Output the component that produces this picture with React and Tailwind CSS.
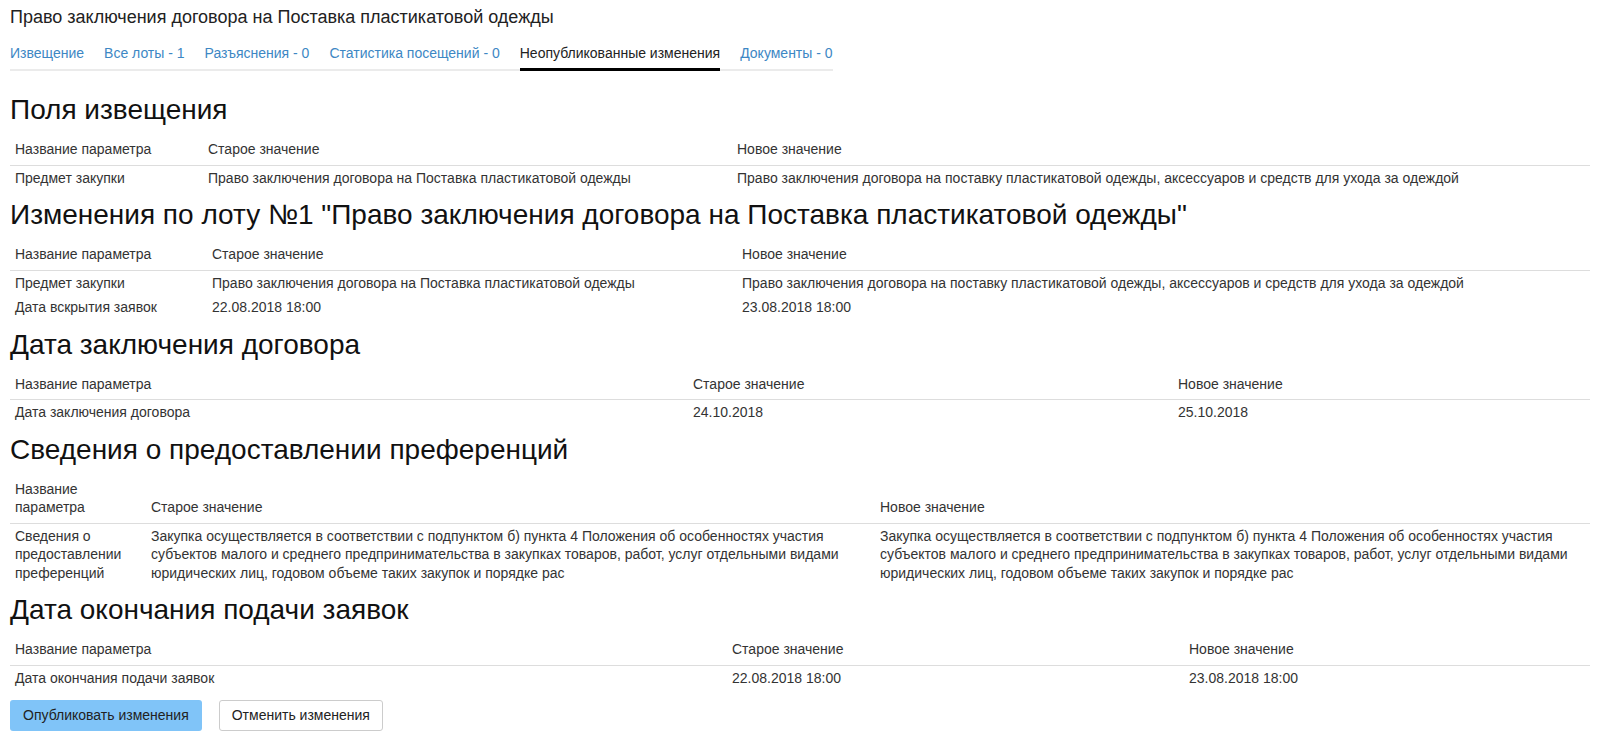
import React from 'react';

const tabs = [
  { label: 'Извещение' },
  { label: 'Все лоты - 1' },
  { label: 'Разъяснения - 0' },
  { label: 'Статистика посещений - 0' },
  { label: 'Неопубликованные изменения', active: true },
  { label: 'Документы - 0' },
];

// column widths: first, second (the third takes the rest)
const sections = [
  {
    title: 'Поля извещения',
    cols: ['w-[193px]', 'w-[529px]'],
    rows: [
      [
        'Предмет закупки',
        'Право заключения договора на Поставка пластикатовой одежды',
        'Право заключения договора на поставку пластикатовой одежды, аксессуаров и средств для ухода за одеждой',
      ],
    ],
  },
  {
    title: 'Изменения по лоту №1 "Право заключения договора на Поставка пластикатовой одежды"',
    cols: ['w-[197px]', 'w-[530px]'],
    rows: [
      [
        'Предмет закупки',
        'Право заключения договора на Поставка пластикатовой одежды',
        'Право заключения договора на поставку пластикатовой одежды, аксессуаров и средств для ухода за одеждой',
      ],
      ['Дата вскрытия заявок', '22.08.2018 18:00', '23.08.2018 18:00'],
    ],
  },
  {
    title: 'Дата заключения договора',
    cols: ['w-[678px]', 'w-[485px]'],
    rows: [['Дата заключения договора', '24.10.2018', '25.10.2018']],
  },
  {
    title: 'Сведения о предоставлении преференций',
    cols: ['w-[136px]', 'w-[729px]'],
    rows: [
      [
        'Сведения о предоставлении преференций',
        'Закупка осуществляется в соответствии с подпунктом б) пункта 4 Положения об особенностях участия субъектов малого и среднего предпринимательства в закупках товаров, работ, услуг отдельными видами юридических лиц, годовом объеме таких закупок и порядке рас',
        'Закупка осуществляется в соответствии с подпунктом б) пункта 4 Положения об особенностях участия субъектов малого и среднего предпринимательства в закупках товаров, работ, услуг отдельными видами юридических лиц, годовом объеме таких закупок и порядке рас',
      ],
    ],
  },
  {
    title: 'Дата окончания подачи заявок',
    cols: ['w-[717px]', 'w-[457px]'],
    rows: [['Дата окончания подачи заявок', '22.08.2018 18:00', '23.08.2018 18:00']],
  },
];

function ChangesTable({ rows, cols }) {
  return (
    <table className="w-full table-fixed border-collapse text-[14px] leading-[18.5px] text-[#333]">
      <colgroup>
        <col className={cols[0]} />
        <col className={cols[1]} />
        <col />
      </colgroup>
      <thead>
        <tr className="border-b border-[#ddd] text-left">
          <th className="px-[5px] pt-[3px] pb-[6px] align-bottom font-normal">Название параметра</th>
          <th className="px-[5px] pt-[3px] pb-[6px] align-bottom font-normal">Старое значение</th>
          <th className="px-[5px] pt-[3px] pb-[6px] align-bottom font-normal">Новое значение</th>
        </tr>
      </thead>
      <tbody>
        {rows.map((r, i) => (
          <tr key={i}>
            {r.map((c, j) => (
              <td key={j} className="px-[5px] py-[3px] align-top">{c}</td>
            ))}
          </tr>
        ))}
      </tbody>
    </table>
  );
}

export default function App() {
  return (
    <div className="min-h-screen bg-white px-[10px] pt-[7px] pb-4" style={{ fontFamily: '"Liberation Sans", Arial, sans-serif' }}>
      <div className="text-[18px] leading-[20px] text-[#222]">
        Право заключения договора на Поставка пластикатовой одежды
      </div>

      <div className="mt-[16px] inline-flex gap-[20px] border-b-2 border-[#ebebeb] text-[14px] leading-[20px]">
        {tabs.map((t) => (
          <a
            key={t.label}
            href="#"
            className={
              t.active
                ? '-mb-[2px] border-b-[3px] border-black pb-[5px] text-[#222]'
                : '-mb-[2px] border-b-[3px] border-transparent pb-[5px] text-[#3d87c4]'
            }
          >
            {t.label}
          </a>
        ))}
      </div>

      {sections.map((s, i) => (
        <div key={i}>
          <h2 className={(i === 0 ? 'mt-[23px]' : 'mt-[9px]') + ' mb-[12px] text-[28px] leading-[31px] text-[#111]'}>
            {s.title}
          </h2>
          <ChangesTable rows={s.rows} cols={s.cols} />
        </div>
      ))}

      <div className="mt-[10px] flex gap-[17px] text-[14px]">
        <button className="h-[31px] rounded-[3px] bg-[#80c4f8] px-[13px] text-[#222]">Опубликовать изменения</button>
        <button className="h-[31px] rounded-[3px] border border-[#ccc] bg-white px-[12px] text-[#222]">Отменить изменения</button>
      </div>
    </div>
  );
}
